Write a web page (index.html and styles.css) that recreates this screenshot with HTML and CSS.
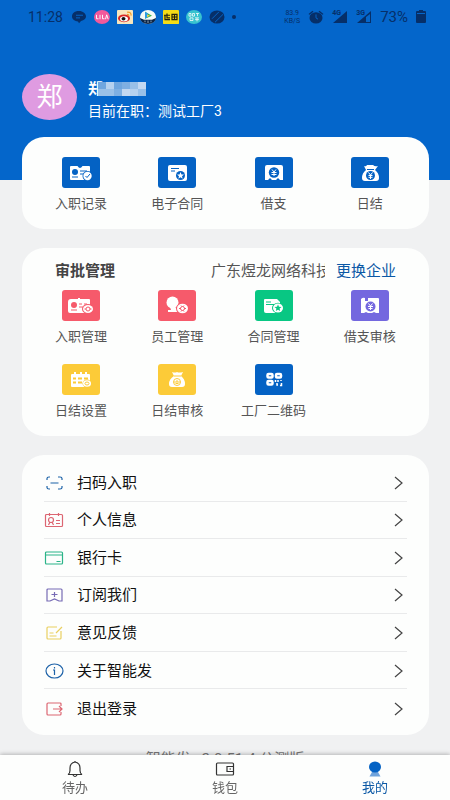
FILE: index.html
```html
<!DOCTYPE html>
<html lang="zh-CN">
<head>
<meta charset="utf-8">
<meta name="viewport" content="width=device-width, initial-scale=1">
<title>我的</title>
<link rel="stylesheet" href="styles.css">
</head>
<body>
<header class="hero">
  <div class="status">
    <span class="clock">11:28</span>
    <div class="notices">
      <svg class="notice" preserveAspectRatio="none" viewBox="0 0 16 16"><path d="M8 1C3 1 1 4 1 7.500S4 13 7 13l1 2 2-2.500c3-.5 5-2.500 5-5C15 4 12 1 8 1z" fill="#062f69"/><path d="M5 6h7M5 9h4" stroke="#0466cb"/></svg>
      <svg class="notice" preserveAspectRatio="none" viewBox="0 0 16 16"><circle cx="8" cy="8" r="8" fill="#f2599b"/><path d="M2.500 5.500v4.500h2M6 5.500v5M8.500 5.500v4.500h2M11.500 10.500l1.200-5 1.500 5" stroke="#fff" fill="none"/></svg>
      <svg class="notice" preserveAspectRatio="none" viewBox="0 0 16 16"><rect width="16" height="16" rx="1" fill="#f8e6bd"/><ellipse cx="7" cy="9.500" rx="6" ry="4.500" fill="#d92723"/><ellipse cx="7" cy="10" rx="4" ry="3" fill="#fff"/><circle cx="6.500" cy="10" r="2" fill="#141414"/><path d="M10 2.500c3-.5 4.500 1.500 4 4M10 5q2 0 2 2" stroke="#ef9b2c" fill="none" stroke-width="1.200"/></svg>
      <svg class="notice" preserveAspectRatio="none" viewBox="0 0 16 16"><circle cx="8" cy="8" r="8" fill="#f4fbf7"/><path d="M0 9a8 7 0 0 0 16 0l-4 2H4z" fill="#0a2447"/><path d="M5 2l7 4.500L5 10z" fill="#35b24a"/><path d="M5 2v8l3-2V4z" fill="#2b9de4"/><path d="M7 5l3 1.500L7 8z" fill="#fbd24c"/><path d="M5 12v2M8 12v3M11 12v2" stroke="#9bb0bc"/></svg>
      <svg class="notice" preserveAspectRatio="none" viewBox="0 0 16 16"><rect width="16" height="16" rx="1" fill="#f4dc16"/><path d="M1 6h6M2 6v5h5M4 4v5h3M9 5h5v6H9zM9 8h5M11.500 5v6" stroke="#24220e" fill="none" stroke-width="1.200"/></svg>
      <svg class="notice" preserveAspectRatio="none" viewBox="0 0 16 16"><circle cx="8" cy="8" r="8" fill="#38c3cf"/><path d="M3 4v3h2V4zM6.500 4v3h2V4zM10 4h3M11.500 4v3M4 9h3v3H4zM9 9h4M9 11h4M11 9v4" stroke="#fff" fill="none" stroke-width=".8"/></svg>
      <svg class="notice" preserveAspectRatio="none" viewBox="0 0 16 16"><circle cx="8" cy="8" r="7.500" fill="#062f69"/><path d="M3 10l7-8M6 14l8-9" stroke="#0466cb"/></svg>
      <svg class="dot" viewBox="0 0 4 4"><circle cx="2" cy="2" r="2" fill="#062f69"/></svg>
    </div>
    <div class="system">
      <span class="speed"><span>83.9</span><span>KB/S</span></span>
      <svg class="notice" preserveAspectRatio="none" viewBox="0 0 16 16"><circle cx="8" cy="9" r="6.500" fill="#062f69"/><path d="M1 5l4-3.500M15 5l-4-3.500" stroke="#062f69" stroke-width="1.500"/><path d="M8 5v4l2 1.500" stroke="#0466cb" fill="none"/></svg>
      <span class="signal"><svg viewBox="0 0 16 14"><path d="M15 1v12H1z" fill="#062f69"/></svg><span class="net">4G</span></span>
      <span class="signal"><svg viewBox="0 0 16 14"><path d="M15 1v12H1z" fill="#062f69"/><path d="M14 4v8h-4V7z" fill="#0466cb"/></svg><span class="net">3G</span></span>
      <span class="power">73%</span>
      <svg class="battery" viewBox="0 0 10 13"><path d="M3 0h4v1h2q1 0 1 1v10q0 1-1 1H1q-1 0-1-1V2q0-1 1-1h2z" fill="#062f69"/><path d="M1 3.500h8" stroke="#0466cb"/></svg>
    </div>
  </div>
  <div class="profile">
    <div class="avatar">郑</div>
    <div class="who">
      <div class="name"><span>郑</span><span class="mask"><i class="m1"></i><i class="m3"></i><i class="m1"></i><i class="m4"></i><i class="m2"></i><i class="m5"></i><i class="m2"></i><i class="m2"></i><i class="m4"></i><i class="m5"></i><i class="m3"></i><i class="m2"></i></span></div>
      <div class="job">目前在职：测试工厂3</div>
    </div>
  </div>
</header>

<main>
  <nav class="card shortcuts lead" aria-label="常用">
    <a class="cell" href="#"><span class="tile blue"><svg viewBox="0 0 38 31"><path fill="#fff" d="M9 9h6.500q2.500 4 5 0H27q1 0 1 1v12q0 1-1 1H9q-1 0-1-1V10q0-1 1-1z"/><circle class="f" cx="13" cy="15" r="3"/><path class="s" d="M10 20h6M18 14h7M18 17h4"/><circle cx="25.500" cy="19" r="5" class="f"/><circle cx="25.500" cy="19" r="4.200" fill="#fff"/><path class="s" d="M23.500 19l1.500 1.500 3-3.500"/></svg></span><span>入职记录</span></a>
    <a class="cell" href="#"><span class="tile blue"><svg viewBox="0 0 38 31"><rect x="10" y="8" width="19" height="16" rx="2" fill="#fff"/><path class="s" d="M13 11.500h8M13 14h4"/><circle class="f" cx="22.500" cy="18.500" r="4.500"/><path fill="#fff" d="M22.500 15l1 2.400 2.500.1-2 1.700.7 2.500-2.200-1.400-2.200 1.400.7-2.500-2-1.700 2.500-.1z"/></svg></span><span>电子合同</span></a>
    <a class="cell" href="#"><span class="tile blue"><svg viewBox="0 0 38 31"><path fill="#fff" d="M12 8h14q2 0 2 2v13h-3l-2-2-2 2h-4l-2-2-2 2h-3V10q0-2 2-2z"/><circle class="f" cx="19" cy="15.500" r="5.200"/><path class="y" d="M17 12.500l2 2.500 2-2.500M19 15v4M16.500 15.500h5M16.500 17.500h5"/></svg></span><span>借支</span></a>
    <a class="cell" href="#"><span class="tile blue"><svg viewBox="0 0 38 31"><path fill="#fff" d="M13 9q2 1 3-1h6q2 2 5 1l-3 4q4 3 4 8 0 3-3 3H14q-3 0-3-3 0-5 4-8z"/><path class="s" d="M16 12.500h7"/><circle class="f" cx="19.500" cy="18.500" r="4.500"/><path class="y" d="M17.500 15.500l2 2.500 2-2.500M19.500 18v4M17.500 18.500h4M17.500 20.300h4"/></svg></span><span>日结</span></a>
  </nav>

  <section class="card approvals">
    <div class="bar">
      <h2>审批管理</h2>
      <span class="company">广东煜龙网络科技</span>
      <a class="switch" href="#">更换企业</a>
    </div>
    <nav class="shortcuts" aria-label="审批管理">
      <a class="cell" href="#"><span class="tile red"><svg viewBox="0 0 38 31"><path fill="#fff" d="M9 9h7v-1h2v1h9q1 0 1 1v12q0 1-1 1H8q-2 0-2-2V12q0-3 3-3z"/><circle class="f" cx="12" cy="15" r="3"/><path class="s" d="M9 20h6M17 14h3M22 14h3M17 17h4"/><ellipse class="f" cx="26" cy="19" rx="6" ry="5"/><ellipse cx="26" cy="19" rx="5" ry="4" fill="#fff"/><circle class="s" cx="26" cy="19" r="2"/><path class="s" d="M22.500 19h1.500M28 19h1.500"/></svg></span><span>入职管理</span></a>
      <a class="cell" href="#"><span class="tile red"><svg viewBox="0 0 38 31"><circle cx="14.500" cy="12.500" r="6" fill="#fff"/><path fill="#fff" d="M12 17h5l4 5H10v-2h3z"/><ellipse class="f" cx="24.500" cy="18.500" rx="6.500" ry="5.500"/><ellipse cx="24.500" cy="18.500" rx="5.500" ry="4.800" fill="#fff"/><circle class="s" cx="24.500" cy="18.500" r="2"/><path class="s" d="M21 18.500h2M26 18.500h2M23 15.500l1 1M26 15.500l-1 1M23 21.500l1-1M26 21.500l-1-1"/></svg></span><span>员工管理</span></a>
      <a class="cell" href="#"><span class="tile green"><svg viewBox="0 0 38 31"><path fill="#fff" d="M10 9h12l3 3v11H11q-2 0-2-2V10q0-1 1-1z"/><path class="s" d="M11 12h5M11 14.500h8"/><ellipse class="f" cx="23" cy="18" rx="6" ry="5.300"/><ellipse cx="23" cy="18" rx="5" ry="4.500" fill="#fff"/><path class="f" d="M23 14.500l1 2.300 2.600.2-2 1.600.6 2.500-2.200-1.400-2.200 1.400.6-2.500-2-1.600 2.600-.2z"/></svg></span><span>合同管理</span></a>
      <a class="cell" href="#"><span class="tile violet"><svg viewBox="0 0 38 31"><path fill="#fff" d="M10 9q2-2 4-1v3h3V8h10q1 0 1 1v14h-3l-2-1-2 1h-4l-2-1-2 1h-3z"/><circle class="f" cx="19.500" cy="16.500" r="5"/><path class="y" d="M17.500 13.500l2 2.500 2-2.500M19.500 16v4M17 16.500h5M17.500 18.500h4"/></svg></span><span>借支审核</span></a>
      <a class="cell" href="#"><span class="tile yellow"><svg viewBox="0 0 38 31"><path fill="#fff" d="M10 10h2V8h2v2h4V8h2v2h3V8h2v2h2q1 0 1 1v11q0 1-1 1H10q-1 0-1-1V11q0-1 1-1z"/><path class="s w" d="M11 14.500h3M16 14.500h4M22 14.500h4M11 18.500h3M16 18.500h4"/><ellipse class="f" cx="25" cy="19.500" rx="4.500" ry="4"/><ellipse cx="25" cy="19.500" rx="4" ry="3.300" fill="#fff"/><ellipse class="s" cx="25" cy="19.500" rx="2" ry="1.500"/></svg></span><span>日结设置</span></a>
      <a class="cell" href="#"><span class="tile yellow"><svg viewBox="0 0 38 31"><path fill="#fff" d="M14 8q3 1 5 0 2 1 6 0l-2 4q4 3 4 8 0 3-3 3H14q-3 0-3-3 0-5 5-8z"/><path class="s" d="M16 12h7"/><circle class="s" cx="19" cy="18" r="3.500"/><path class="s" d="M16 18h6M17.500 19.500h3M19 16v2"/></svg></span><span>日结审核</span></a>
      <a class="cell" href="#"><span class="tile blue"><svg viewBox="0 0 38 31"><g fill="none" stroke="#fff" stroke-width="2.500"><rect x="12.500" y="10" width="5" height="3.500" rx="1"/><rect x="21" y="10" width="5" height="3.500" rx="1"/><rect x="12.500" y="17" width="5" height="3.500" rx="1"/></g><path fill="none" stroke="#fff" stroke-width="1.500" d="M20.500 16v2M22 19v2h1M23 16v2M25 21.500h1.500V19M26 16v1"/></svg></span><span>工厂二维码</span></a>
    </nav>
  </section>

  <nav class="card menu" aria-label="设置">
    <a class="row" href="#"><svg class="mark c-blue" viewBox="0 0 20 16"><path d="M3 5V3.500Q3 2 5 2h1M14 2h2q2 0 2 1.500V5M3 11v1.500Q3 14 5 14h1M14 14h2q2 0 2-1.500V11M6.500 8h8"/></svg><span>扫码入职</span><svg class="go" viewBox="0 0 10 14"><path d="M1 1l7 6-7 6"/></svg></a>
    <a class="row" href="#"><svg class="mark c-red" viewBox="0 0 20 16"><rect x="1.500" y="2.500" width="17" height="12" rx="1"/><path d="M5.500 1v3M14.500 1v3M4.500 13l1.500-3M9.500 13L8 10M12 8.500h4M12 11.500h4"/><circle cx="7" cy="8" r="2.500"/></svg><span>个人信息</span><svg class="go" viewBox="0 0 10 14"><path d="M1 1l7 6-7 6"/></svg></a>
    <a class="row" href="#"><svg class="mark c-green" viewBox="0 0 20 16"><rect x="1.500" y="2" width="17" height="12" rx="1"/><path d="M1.500 5h17M12.500 11.500h4"/></svg><span>银行卡</span><svg class="go" viewBox="0 0 10 14"><path d="M1 1l7 6-7 6"/></svg></a>
    <a class="row" href="#"><svg class="mark c-violet" viewBox="0 0 20 16"><path d="M4 2h13q1 0 1 1v11h-3l-4.500-2L6 14H3V3q0-1 1-1zM7.500 7.500h6M10.500 5v5"/></svg><span>订阅我们</span><svg class="go" viewBox="0 0 10 14"><path d="M1 1l7 6-7 6"/></svg></a>
    <a class="row" href="#"><svg class="mark c-yellow" viewBox="0 0 20 16"><path d="M13 2H4Q3 2 3 3v10q0 1 1 1h12q1 0 1-1V6M18 2l-6 6M5.500 8h4M5.500 11h7"/></svg><span>意见反馈</span><svg class="go" viewBox="0 0 10 14"><path d="M1 1l7 6-7 6"/></svg></a>
    <a class="row" href="#"><svg class="mark c-blue" viewBox="0 0 20 16"><ellipse cx="10.500" cy="8" rx="8.500" ry="7"/><path d="M10.500 4v1.500M9 7h1.500v5"/></svg><span>关于智能发</span><svg class="go" viewBox="0 0 10 14"><path d="M1 1l7 6-7 6"/></svg></a>
    <a class="row" href="#"><svg class="mark c-red" viewBox="0 0 20 16"><path d="M17 5V3q0-1-1-1H4Q3 2 3 3v10q0 1 1 1h12q1 0 1-1v-2M9 8h9M15 5l3 3-3 3"/></svg><span>退出登录</span><svg class="go" viewBox="0 0 10 14"><path d="M1 1l7 6-7 6"/></svg></a>
  </nav>
  <p class="version">智能发 v2.0.51.4 公测版</p>
</main>

<nav class="tabs" aria-label="主导航">
  <a class="tab" href="#"><svg viewBox="0 0 20 18"><path d="M3 14.500q2-1 2-4V8q0-5 5-6 5 1 5 6v2.500q0 3 2 4zM8 15q2 3 4 0M10 2V1"/></svg><span>待办</span></a>
  <a class="tab" href="#"><svg viewBox="0 0 20 18"><rect x="1.500" y="3" width="17" height="12" rx="1"/><path d="M18.500 6.500H12v5h6.500M14.500 9h1.500"/></svg><span>钱包</span></a>
  <a class="tab active" href="#" aria-current="page"><svg viewBox="0 0 20 18"><path class="base" d="M7 12h6l2.500 4.500h-11z"/><ellipse class="head" cx="10" cy="7" rx="6" ry="5.500"/></svg><span>我的</span></a>
</nav>
</body>
</html>
```

FILE: styles.css
```css
* { box-sizing: border-box; }

body {
  margin: 0;
  min-height: 100vh;
  background: #f0f1f2;
  color: #111;
  font-family: Roboto, "Noto Sans CJK SC", sans-serif;
  font-size: 15px;
  line-height: 20px;
}

a { color: inherit; text-decoration: none; }
svg { display: block; flex: none; }

.hero {
  height: 180px;
  background: #0466cb;
  color: #fff;
}

.status {
  display: flex;
  align-items: center;
  height: 33px;
  padding: 0 24px 0 28px;
  color: #062f69;
}
.clock { width: 43px; font-size: 14px; }
.notices { display: flex; align-items: center; gap: 7px; }
.notice { width: 16px; height: 14px; }
.dot { width: 4px; height: 4px; }
.system { display: flex; align-items: center; gap: 8px; margin-left: auto; }
.speed {
  display: flex;
  flex-direction: column;
  font-size: 7px;
  line-height: 8px;
  text-align: center;
}
.signal { position: relative; }
.signal svg { width: 16px; height: 14px; }
.net { position: absolute; top: -1px; left: 0; font-size: 7px; line-height: 8px; font-weight: bold; }
.power { font-size: 15px; }
.battery { width: 10px; height: 13px; }

.profile {
  display: flex;
  align-items: center;
  gap: 11px;
  padding: 40px 22px 0;
}
.avatar {
  display: grid;
  place-items: center;
  width: 55px;
  height: 46px;
  border-radius: 50%;
  background: #df9be1;
  font-size: 26px;
}
.who { display: grid; gap: 2px; padding-top: 6px; }
.name { display: flex; align-items: center; height: 20px; font-weight: bold; }
.mask {
  position: relative;
  display: grid;
  grid-template-columns: repeat(6, 8px);
  grid-auto-rows: 7px;
  margin-left: -5px;
}
.m1 { background: #6fa6df; }
.m2 { background: #99c0e8; }
.m3 { background: #b5d1ef; }
.m4 { background: #7eafe2; }
.m5 { background: #c3d8f1; }
.job { font-size: 14px; }

.card {
  margin: 0 21px 19px 22px;
  border-radius: 22px;
  background: #fdfefd;
}
.shortcuts {
  display: grid;
  grid-template-columns: repeat(4, 1fr);
  row-gap: 17px;
  padding: 0 11px 15px;
}
.lead { position: relative; margin-top: -43px; padding-top: 20px; }
.cell {
  display: flex;
  flex-direction: column;
  align-items: center;
  gap: 6px;
  color: #555;
  font-size: 13px;
  white-space: nowrap;
}
.tile { width: 38px; height: 31px; border-radius: 3px; background: currentColor; }
.tile svg { width: 38px; height: 31px; }
.blue { color: #0462c4; }
.red { color: #f65a6b; }
.green { color: #08c783; }
.violet { color: #7468df; }
.yellow { color: #fccb38; }
.f { fill: currentColor; }
.s { fill: none; stroke: currentColor; stroke-width: 1; }
.w { stroke-width: 2; }
.y { fill: none; stroke: #fff; stroke-width: 1; }

.approvals { padding-top: 13px; }
.bar { display: flex; padding: 0 33px 9px; }
.bar h2 { margin: 0; color: #444; font-size: 15px; line-height: 20px; }
.company {
  width: 114px;
  margin-left: auto;
  overflow: hidden;
  color: #555;
  white-space: nowrap;
}
.switch { margin-left: 11px; color: #0b58a5; }

.menu {
  display: grid;
  grid-auto-rows: 1fr;
  min-height: 280px;
  margin-bottom: 14px;
  padding: 9px 22px 8px;
}
.row {
  display: flex;
  align-items: center;
  gap: 13px;
  padding-top: 1px;
  border-bottom: 1px solid #e9eaeb;
}
.row:last-child { border-bottom: 0; }
.mark { width: 20px; height: 16px; fill: none; stroke: currentColor; stroke-width: 1.2; }
.c-blue { color: #1d62a8; }
.c-red { color: #dc6672; }
.c-green { color: #2bb489; }
.c-violet { color: #776bb5; }
.c-yellow { color: #e9cf60; }
.go {
  width: 10px;
  height: 14px;
  margin: 0 3px 0 auto;
  fill: none;
  stroke: #444;
  stroke-width: 1.2;
}

.version { margin: 0; padding-bottom: 30px; color: #777; text-align: center; }

.tabs {
  position: fixed;
  right: 0;
  bottom: 0;
  left: 0;
  display: grid;
  grid-template-columns: repeat(3, 1fr);
  height: 45px;
  padding-top: 5px;
  background: #fdfefd;
  box-shadow: 0 -1px 4px rgba(0, 0, 0, 0.25);
}
.tab {
  display: flex;
  flex-direction: column;
  align-items: center;
  color: #666;
  font-size: 13px;
}
.tab svg { width: 20px; height: 18px; fill: none; stroke: #333; stroke-width: 1.2; }
.active { color: #0b58a5; }
.tab .base { fill: #6fa3dc; stroke: none; }
.tab .head { fill: #0462c4; stroke: none; }
```
